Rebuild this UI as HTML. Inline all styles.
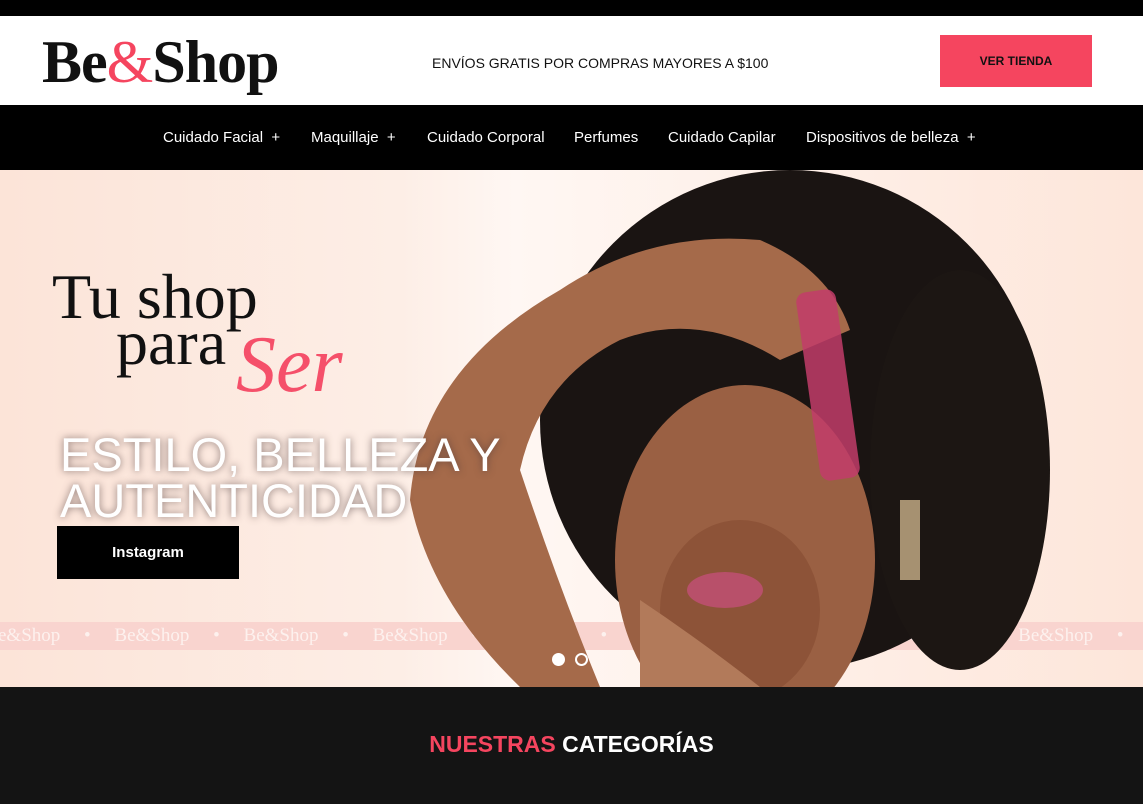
<!DOCTYPE html>
<html><head><meta charset="utf-8"><style>
*{margin:0;padding:0;box-sizing:border-box}
body{width:1143px;height:804px;overflow:hidden;background:#141414;font-family:"Liberation Sans",sans-serif;position:relative}
.top{position:absolute;left:0;top:0;width:1143px;height:16px;background:#000}
.hdr{position:absolute;left:0;top:16px;width:1143px;height:89px;background:#fff}
.logo{position:absolute;left:42px;top:16px;font-family:"Liberation Serif",serif;font-weight:bold;font-size:60px;letter-spacing:-1px;color:#111;line-height:60px}
.logo span{color:#f5455f;font-weight:normal}
.ship{position:absolute;left:432px;top:39px;font-size:14px;color:#111}
.btn{position:absolute;left:940px;top:19px;width:152px;height:52px;background:#f5455f;color:#111;font-size:12px;font-weight:bold;text-align:center;line-height:52px}
.nav{position:absolute;left:0;top:105px;width:1143px;height:65px;background:#000;color:#fff;font-size:15px}
.nav span{position:absolute;top:24px}
.hero{position:absolute;left:0;top:170px;width:1143px;height:517px;overflow:hidden;background:linear-gradient(90deg,#fce4d8 0%,#fdeee6 35%,#fff7f3 45%,#fde6da 100%)}
.band{position:absolute;left:0;top:452px;width:1143px;height:28px;background:#f9d4cf;font-family:"Liberation Serif",serif;font-size:19px;color:#fdf1ee;white-space:nowrap;line-height:28px}
.t1{position:absolute;left:52px;top:104px;font-family:"Liberation Serif",serif;font-size:64px;line-height:46px;color:#111}
.ser{position:absolute;left:236px;top:150px;font-family:"Liberation Serif",serif;font-style:italic;font-size:80px;color:#f5506a}
.big{position:absolute;left:60px;top:262px;font-size:47px;line-height:46px;color:#fff;text-shadow:0 0 8px rgba(80,60,60,.7)}
.ig{position:absolute;left:57px;top:356px;width:182px;height:53px;background:#000;color:#fff;font-weight:bold;font-size:15px;text-align:center;line-height:53px}
.dot{position:absolute;top:483px;width:13px;height:13px;border-radius:50%}
h2{position:absolute;left:0;width:1143px;top:731px;text-align:center;font-size:23px;font-weight:bold;color:#fff}
</style></head><body>
<div class="top"></div>
<div class="hdr"><div class="logo">Be<span>&amp;</span>Shop</div><div class="ship">ENVÍOS GRATIS POR COMPRAS MAYORES A $100</div><div class="btn">VER TIENDA</div></div>
<div class="nav"><span style="left:163px">Cuidado Facial &nbsp;+</span><span style="left:311px">Maquillaje &nbsp;+</span><span style="left:427px">Cuidado Corporal</span><span style="left:574px">Perfumes</span><span style="left:668px">Cuidado Capilar</span><span style="left:806px">Dispositivos de belleza &nbsp;+</span></div>
<div class="hero">
<div class="band"><span style="margin-left:-2px">e&amp;Shop &nbsp;&nbsp;&nbsp;&nbsp;•&nbsp;&nbsp;&nbsp;&nbsp; Be&amp;Shop &nbsp;&nbsp;&nbsp;&nbsp;•&nbsp;&nbsp;&nbsp;&nbsp; Be&amp;Shop &nbsp;&nbsp;&nbsp;&nbsp;•&nbsp;&nbsp;&nbsp;&nbsp; Be&amp;Shop &nbsp;&nbsp;&nbsp;&nbsp;•&nbsp;&nbsp;&nbsp;&nbsp; Be&amp;Shop &nbsp;&nbsp;&nbsp;&nbsp;•&nbsp;&nbsp;&nbsp;&nbsp; Be&amp;Shop &nbsp;&nbsp;&nbsp;&nbsp;•&nbsp;&nbsp;&nbsp;&nbsp; Be&amp;Shop &nbsp;&nbsp;&nbsp;&nbsp;•&nbsp;&nbsp;&nbsp;&nbsp; Be&amp;Shop &nbsp;&nbsp;&nbsp;&nbsp;•&nbsp;&nbsp;&nbsp;&nbsp; Be&amp;Shop &nbsp;&nbsp;&nbsp;&nbsp;•&nbsp;&nbsp;&nbsp;&nbsp; Be&amp;Shop</span></div>
<svg width="1143" height="517" style="position:absolute;left:0;top:0">
<ellipse cx="790" cy="250" rx="250" ry="250" fill="#1a1412"/>
<ellipse cx="960" cy="300" rx="90" ry="200" fill="#1c1613"/>
<path d="M410 330 Q420 200 560 120 Q650 60 760 70 Q830 100 850 160 L780 190 Q700 140 620 170 Q540 210 520 300 Q560 420 600 517 L520 517 Q430 430 410 330Z" fill="#a56a4a"/>
<ellipse cx="745" cy="390" rx="130" ry="175" fill="#9a6043"/>
<ellipse cx="740" cy="440" rx="80" ry="90" fill="#8d5338"/>
<path d="M640 430 Q700 470 760 517 L640 517Z" fill="#b27a5a"/>
<ellipse cx="725" cy="420" rx="38" ry="18" fill="#b8506a"/>
<rect x="808" y="120" width="40" height="190" rx="10" transform="rotate(-8 828 215)" fill="#c23c6a" opacity=".85"/>
<rect x="900" y="330" width="20" height="80" fill="#c9b08a" opacity=".8"/>
</svg>
<div class="t1">Tu shop<br>&nbsp;&nbsp;&nbsp;&nbsp;para</div>
<div class="ser">Ser</div>
<div class="big">ESTILO, BELLEZA Y<br>AUTENTICIDAD</div>
<div class="ig">Instagram</div>
<div class="dot" style="left:552px;background:#fff"></div>
<div class="dot" style="left:575px;border:2px solid #fff"></div>
</div>
<h2><span style="color:#f5455f">NUESTRAS</span> CATEGORÍAS</h2>
</body></html>
